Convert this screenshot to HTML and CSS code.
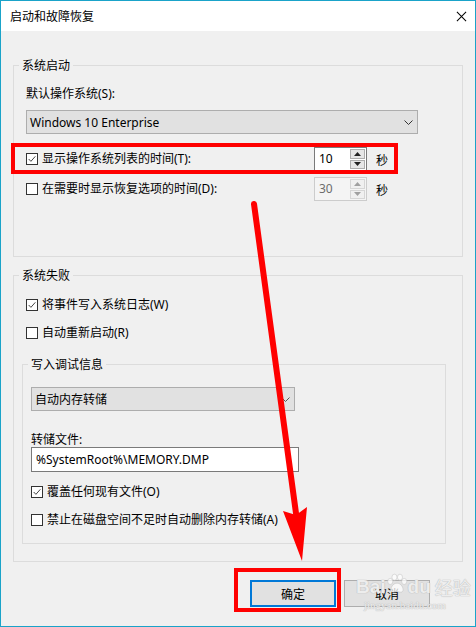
FILE: index.html
```html
<!DOCTYPE html>
<html>
<head>
<meta charset="utf-8">
<link rel="stylesheet" href="styles.css">
</head>
<body>
<div class="window">
  <div class="titlebar">
    <span class="title">启动和故障恢复</span>
    <svg class="close" viewBox="0 0 12 12"><path d="M1 1L11 11M11 1L1 11" stroke="#000" stroke-width="1.1" fill="none"/></svg>
  </div>
  <div class="content">
    <div class="group g1">
      <div class="group-title t1">系统启动</div>
      <div class="lbl">默认操作系统(S):</div>
      <div class="select sel-os"><span>Windows 10 Enterprise</span><svg class="chev" viewBox="0 0 9 5"><path d="M0.5 0.5L4.5 4.5L8.5 0.5" stroke="#333" fill="none"/></svg></div>
      <div class="row row-t1">
        <div class="check"><span class="box"><svg viewBox="0 0 12 12"><path d="M2 6L4.7 8.8L10 2.8" stroke="#333" stroke-width="1.1" fill="none"/></svg></span>显示操作系统列表的时间(T):</div>
        <div class="spinner">
          <span class="spin-val">10</span>
          <div class="spin-btns">
            <span class="spin-btn"><svg viewBox="0 0 7 4"><path d="M0 4L3.5 0L7 4Z" fill="#222"/></svg></span>
            <span class="spin-btn"><svg viewBox="0 0 7 4"><path d="M0 0L3.5 4L7 0Z" fill="#222"/></svg></span>
          </div>
        </div>
        <span class="unit">秒</span>
      </div>
      <div class="row row-t2">
        <div class="check"><span class="box"></span>在需要时显示恢复选项的时间(D):</div>
        <div class="spinner disabled">
          <span class="spin-val">30</span>
          <div class="spin-btns">
            <span class="spin-btn"><svg viewBox="0 0 7 4"><path d="M0 4L3.5 0L7 4Z" fill="#a0a0a0"/></svg></span>
            <span class="spin-btn"><svg viewBox="0 0 7 4"><path d="M0 0L3.5 4L7 0Z" fill="#a0a0a0"/></svg></span>
          </div>
        </div>
        <span class="unit">秒</span>
      </div>
    </div>

    <div class="group g2">
      <div class="group-title t2">系统失败</div>
      <div class="check c-w"><span class="box"><svg viewBox="0 0 12 12"><path d="M2 6L4.7 8.8L10 2.8" stroke="#333" stroke-width="1.1" fill="none"/></svg></span>将事件写入系统日志(W)</div>
      <div class="check c-r"><span class="box"></span>自动重新启动(R)</div>

      <div class="group g3">
        <div class="group-title t3">写入调试信息</div>
        <div class="select sel-dump"><span>自动内存转储</span><svg class="chev" viewBox="0 0 9 5"><path d="M0.5 0.5L4.5 4.5L8.5 0.5" stroke="#555" fill="none"/></svg></div>
        <div class="lbl lbl-file">转储文件:</div>
        <div class="input">%SystemRoot%\MEMORY.DMP</div>
        <div class="check c-o"><span class="box"><svg viewBox="0 0 12 12"><path d="M2 6L4.7 8.8L10 2.8" stroke="#333" stroke-width="1.1" fill="none"/></svg></span>覆盖任何现有文件(O)</div>
        <div class="check c-a"><span class="box"></span>禁止在磁盘空间不足时自动删除内存转储(A)</div>
      </div>
    </div>

    <div class="buttons">
      <div class="btn btn-primary">确定</div>
      <div class="btn">取消</div>
    </div>
  </div>

  <div class="watermark">
    <div class="wm-main">Bai<svg class="paw" viewBox="0 0 26 24"><ellipse cx="5" cy="9" rx="3" ry="3.6"/><ellipse cx="10" cy="4" rx="3" ry="3.6"/><ellipse cx="16.5" cy="4" rx="3" ry="3.6"/><ellipse cx="21.5" cy="9" rx="3" ry="3.6"/><path d="M13 11C8 11 5 17 6 20C7 23 11 21 13 21C15 21 19 23 20 20C21 17 18 11 13 11Z"/></svg>du <span class="wm-cn">经验</span></div>
    <div class="wm-url">jingyan.baidu.com</div>
  </div>

  <svg class="annot" viewBox="0 0 476 627" width="476" height="627">
    <rect x="13" y="145" width="383" height="27" fill="none" stroke="#ff0000" stroke-width="4"/>
    <rect x="236" y="570" width="103" height="40" fill="none" stroke="#ff0000" stroke-width="4"/>
    <line x1="254" y1="204" x2="298" y2="528" stroke="#ff0000" stroke-width="6" stroke-linecap="round"/>
    <polygon points="283,511 296,515 307,507 302,561" fill="#ff0000"/>
  </svg>
</div>
</body>
</html>
```

FILE: styles.css
```css
body {
  margin: 0;
}

.window {
  position: relative;
  width: 476px;
  height: 627px;
  box-sizing: border-box;
  border: 1px solid #1aa3c9;
  background: #f0f0f0;
  font-family: "Noto Sans", "Noto Sans CJK SC", sans-serif;
  font-size: 12px;
  color: #000;
  overflow: hidden;
}

.titlebar {
  height: 30px;
  background: #fff;
  display: flex;
  align-items: center;
  justify-content: space-between;
  padding: 0 8px 0 9px;
}

.title {
  font-family: "Noto Sans CJK SC", sans-serif;
  line-height: 16px;
}

.close {
  width: 11px;
  height: 11px;
  margin-top: 1px;
}

.content {
  padding: 0 12px;
}

.group {
  border: 1px solid #dcdcdc;
}

.group-title {
  width: fit-content;
  padding: 0 3px;
  background: #f0f0f0;
  line-height: 16px;
  margin-top: -8px;
}

.g1 {
  margin-top: 34px;
  padding: 0 12px 55px 12px;
}

.t1 {
  margin-left: -7px;
}

.lbl {
  line-height: 16px;
  margin-top: 12px;
}

.select {
  box-sizing: border-box;
  height: 24px;
  background: #e1e1e1;
  border: 1px solid #adadad;
  display: flex;
  align-items: center;
  justify-content: space-between;
  padding: 0 4px 0 3px;
}

.sel-os {
  width: 392px;
  margin-top: 8px;
}

.chev {
  width: 9px;
  height: 5px;
}

.row {
  display: flex;
  align-items: center;
  height: 24px;
}

.row-t1 {
  margin-top: 13px;
}

.row-t2 {
  margin-top: 6px;
}

.row .check {
  width: 288px;
}

.check {
  display: flex;
  align-items: center;
  line-height: 16px;
  height: 16px;
}

.box {
  width: 12px;
  height: 12px;
  box-sizing: border-box;
  border: 1px solid #333;
  background: #fff;
  margin-right: 4px;
  flex: none;
  display: flex;
}

.box svg {
  width: 10px;
  height: 10px;
}

.spinner {
  box-sizing: border-box;
  width: 53px;
  height: 24px;
  border: 1px solid #7a7a7a;
  background: #fff;
  display: flex;
}

.spin-val {
  flex: 1;
  padding-left: 4px;
  line-height: 22px;
}

.spin-btns {
  width: 16px;
  display: flex;
  flex-direction: column;
  gap: 1px;
  padding: 1px 1px 1px 0;
  box-sizing: border-box;
}

.spin-btn {
  flex: 1;
  border: 1px solid #adadad;
  background: #e6e6e6;
  display: flex;
  align-items: center;
  justify-content: center;
}

.spin-btn svg {
  width: 7px;
  height: 4px;
}

.spinner.disabled {
  border-color: #cccccc;
  background: #f4f4f4;
  color: #6d6d6d;
}

.spinner.disabled .spin-btn {
  border-color: #d6d6d6;
  background: #f0f0f0;
}

.unit {
  margin-left: 9px;
  font-family: "Noto Sans CJK SC", sans-serif;
}

.g2 {
  margin-top: 18px;
  padding: 0 16px 17px 8px;
}

.t2 {
  margin-left: -3px;
}

.g2 > .check {
  margin-left: 4px;
}

.c-w {
  margin-top: 13px;
}

.c-r {
  margin-top: 12px;
}

.g3 {
  margin-top: 23px;
  padding: 0 8px 15px 8px;
}

.t3 {
  margin-left: -3px;
}

.sel-dump {
  width: 264px;
  margin-top: 14px;
}

.lbl-file {
  line-height: 14px;
  margin-top: 22px;
}

.input {
  box-sizing: border-box;
  width: 268px;
  height: 25px;
  border: 1px solid #7a7a7a;
  background: #fff;
  padding-left: 4px;
  line-height: 23px;
}

.c-o {
  margin-top: 12px;
}

.c-a {
  margin-top: 12px;
}

.buttons {
  display: flex;
  justify-content: flex-end;
  gap: 8px;
  margin-top: 18px;
  padding-right: 33px;
}

.btn {
  box-sizing: border-box;
  width: 86px;
  height: 27px;
  border: 1px solid #adadad;
  background: #e1e1e1;
  display: flex;
  align-items: center;
  justify-content: center;
}

.btn-primary {
  border: 2px solid #0078d7;
}

.watermark {
  position: absolute;
  left: 355px;
  top: 574px;
  color: rgba(255, 255, 255, 0.75);
  text-shadow: 0 0 1px #b8b8b8, 0 0 1px #b8b8b8;
  pointer-events: none;
}

.wm-main {
  display: flex;
  align-items: center;
  font-family: "Liberation Sans", sans-serif;
  font-size: 19px;
  font-weight: bold;
  line-height: 24px;
}

.paw {
  width: 22px;
  height: 22px;
  fill: rgba(255, 255, 255, 0.75);
  stroke: #c0c0c0;
  stroke-width: 0.6;
  margin-top: -6px;
}

.wm-cn {
  font-family: "Noto Sans CJK SC", sans-serif;
  font-size: 18px;
  font-weight: normal;
  margin-left: 4px;
}

.wm-url {
  font-family: "Liberation Serif", serif;
  font-size: 11px;
  line-height: 12px;
  margin-left: 8px;
}

.annot {
  position: absolute;
  left: -1px;
  top: -1px;
  pointer-events: none;
}
```
